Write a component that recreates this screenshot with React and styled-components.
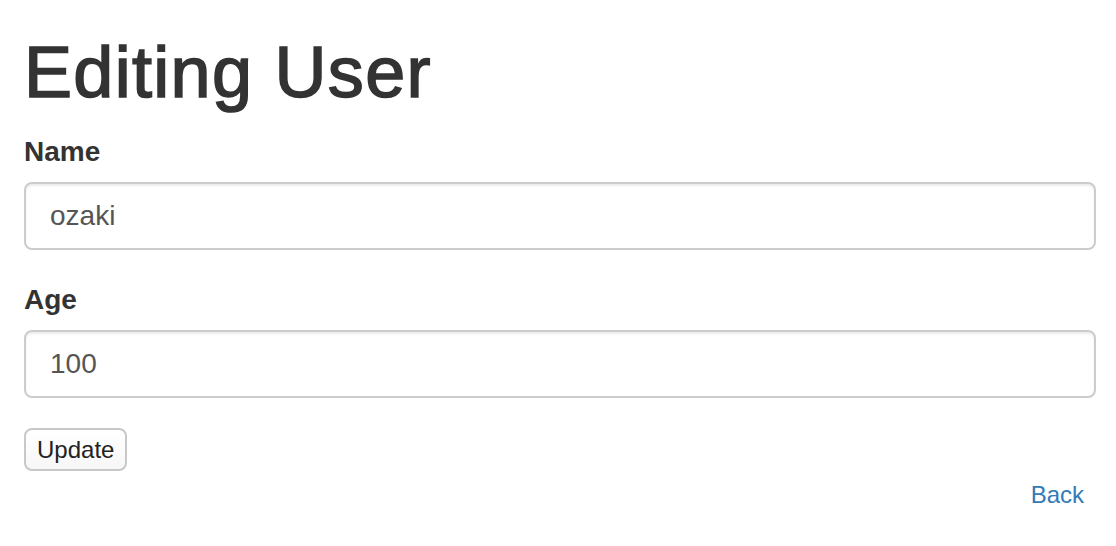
import React from 'react'
import styled, {createGlobalStyle} from 'styled-components'

const GlobalStyle = createGlobalStyle`
    body{
        margin: 0;
        background: #fff;
        font-family: "Liberation Sans", Arial, sans-serif;
        color: #333;
    }
`;

function App(){
    return(
        <>
            <GlobalStyle/>
            <Page>
                <Title>Editing User</Title>
                <form onSubmit={e => e.preventDefault()}>
                    <FormGroup>
                        <Label htmlFor="user_name">Name</Label>
                        <Input id="user_name" type="text" defaultValue="ozaki"/>
                    </FormGroup>
                    <FormGroup>
                        <Label htmlFor="user_age">Age</Label>
                        <Input id="user_age" type="text" defaultValue="100"/>
                    </FormGroup>
                    <SubmitButton type="submit">Update</SubmitButton>
                </form>
                <Footer>
                    <BackLink href="#">Back</BackLink>
                </Footer>
            </Page>
        </>
    )
}
export default App

const Page = styled.div`
    padding: 33px 20px 0 24px;
`;

// Helvetica Neue 500 look: regular face thickened a little
const Title = styled.h1`
    margin: 0 0 20px;
    font-size: 72px;
    font-weight: 400;
    line-height: 1.1;
    letter-spacing: 1.3px;
    -webkit-text-stroke: 1.6px #333;
    color: #333;
`;

const FormGroup = styled.div`
    margin-bottom: 30px;
`;

const Label = styled.label`
    display: block;
    margin-bottom: 10px;
    font-size: 28px;
    font-weight: 700;
    line-height: 40px;
    color: #333;
`;

const Input = styled.input`
    display: block;
    box-sizing: border-box;
    width: 100%;
    height: 68px;
    margin: 0;
    padding: 12px 24px;
    font-family: inherit;
    font-size: 28px;
    line-height: 40px;
    color: #555;
    background: #fff;
    border: 2px solid #ccc;
    border-radius: 8px;
    box-shadow: inset 0 2px 2px rgba(0,0,0,0.075);
    outline: none;
`;

const SubmitButton = styled.button`
    display: block;
    box-sizing: border-box;
    height: 43px;
    margin: 0;
    padding: 0 11px;
    font-family: inherit;
    font-size: 24px;
    line-height: 28px;
    color: #222;
    background: linear-gradient(#fff, #f7f7f7);
    border: 2px solid #c8c8c8;
    border-radius: 8px;
    cursor: pointer;
`;

const Footer = styled.div`
    display: flex;
    justify-content: flex-end;
    padding-right: 12px;
    margin-top: 7px;
`;

const BackLink = styled.a`
    font-size: 24px;
    line-height: 34px;
    color: #337ab7;
    text-decoration: none;
`;
